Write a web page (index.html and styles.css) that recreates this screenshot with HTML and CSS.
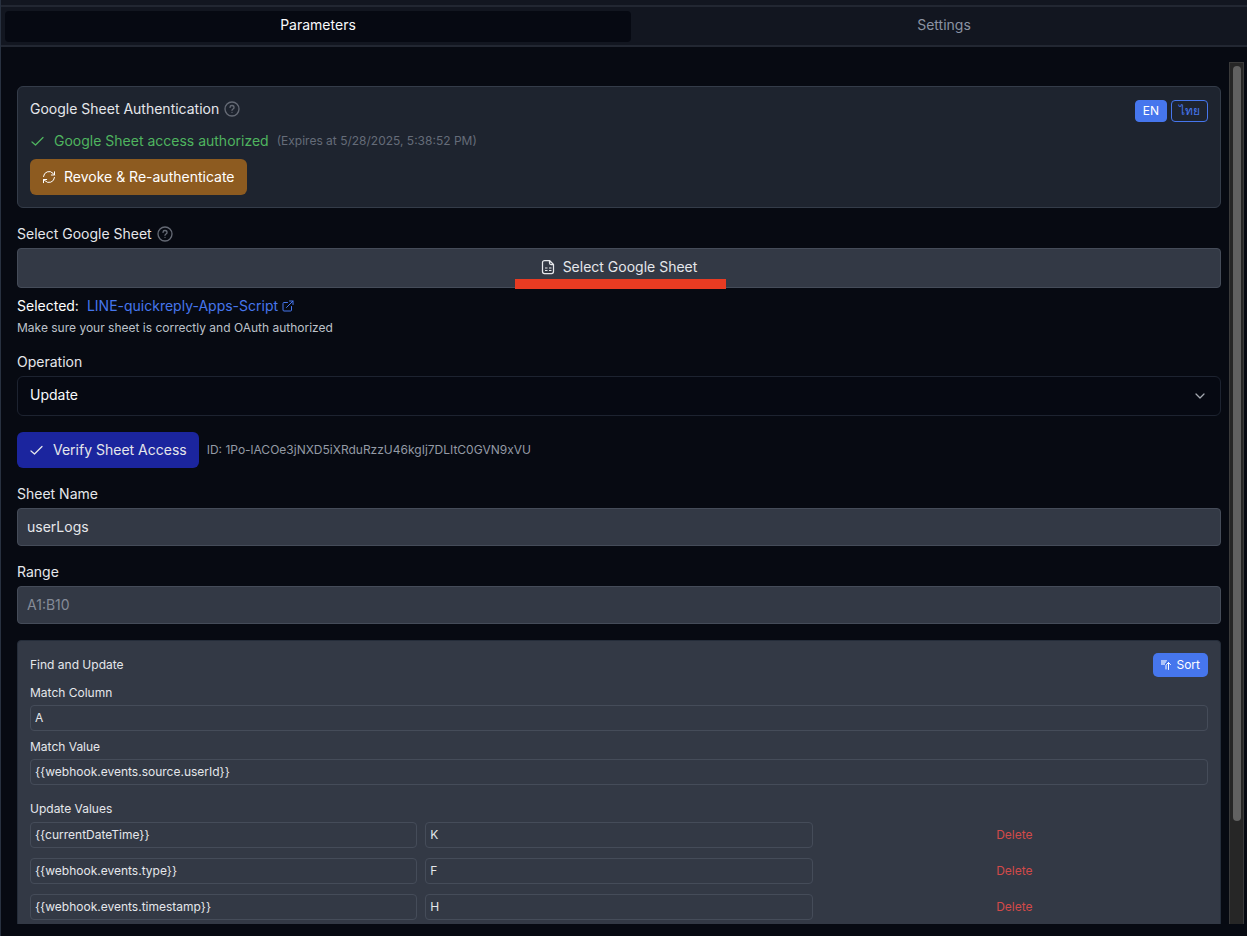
FILE: index.html
```html
<!DOCTYPE html>
<html lang="en">
<head>
<meta charset="utf-8">
<title>Google Sheet Node</title>
<link rel="stylesheet" href="styles.css">
</head>
<body>
<main class="panel">
  <div class="tabs" role="tablist">
    <button class="tab tab-active" type="button" role="tab" aria-selected="true">Parameters</button>
    <button class="tab" type="button" role="tab" aria-selected="false">Settings</button>
  </div>
  <div class="viewport">
    <div class="content">
      <section class="card auth">
        <div class="auth-main">
          <h2 class="title">Google Sheet Authentication
            <svg class="icon-help" viewBox="0 0 24 24"><circle cx="12" cy="12" r="10.5"/><path d="M9 9.500a3 3 0 0 1 6 .5c0 2-3 2-3 4M12 17h.01"/></svg>
          </h2>
          <p class="status">
            <svg class="icon icon-check" viewBox="0 0 14 14"><path d="M2 8 5.500 11 13 3.500"/></svg>
            <span class="status-text">Google Sheet access authorized</span>
            <span class="expires">(Expires at 5/28/2025, 5:38:52 PM)</span>
          </p>
          <button class="btn btn-revoke" type="button">
            <svg class="icon icon-sync" viewBox="0 0 14 14"><path d="M1.500 6.500A5.500 5.500 0 0 1 11 3.300L12.500 5M12.500 1.800V5H9.300M12.500 7.500A5.500 5.500 0 0 1 3 10.700L1.500 9.500M1.500 12.700V9.500h3.200"/></svg>
            Revoke &amp; Re-authenticate
          </button>
        </div>
        <div class="langs">
          <button class="lang lang-active" type="button">EN</button>
          <button class="lang" type="button" lang="th">ไทย</button>
        </div>
      </section>

      <section class="group">
        <h3 class="label">Select Google Sheet
          <svg class="icon-help" viewBox="0 0 24 24"><circle cx="12" cy="12" r="10.5"/><path d="M9 9.500a3 3 0 0 1 6 .5c0 2-3 2-3 4M12 17h.01"/></svg>
        </h3>
        <button class="select-sheet" type="button">
          <span class="select-inner">
            <svg class="icon-sheet" viewBox="0 0 14 16"><path d="M8.500 1.500h-5a2 2 0 0 0-2 2v9a2 2 0 0 0 2 2h7a2 2 0 0 0 2-2v-7zM8.500 1.500V4A1.500 1.500 0 0 0 10 5.500h2.500"/><path class="cells" d="M4 9h2.500M8 9h2.500M4 11.500h2.500M8 11.500h2.500"/></svg>
            Select Google Sheet
            <span class="marker"></span>
          </span>
        </button>
        <p class="selected">Selected:
          <a class="sheet-link" href="#">LINE-quickreply-Apps-Script
            <svg class="icon-link" viewBox="0 0 24 24"><path d="M11 5H4a2 2 0 0 0-2 2v13a2 2 0 0 0 2 2h13a2 2 0 0 0 2-2v-7M9 15 22 2M15 2h7v7"/></svg></a>
        </p>
        <p class="hint">Make sure your sheet is correctly and OAuth authorized</p>
      </section>

      <div class="group">
        <label class="label" for="operation">Operation</label>
        <div class="select-wrap">
          <select class="select" id="operation"><option>Update</option></select>
          <svg class="icon-chevron" viewBox="0 0 10 6"><path d="m1 1 4 4 4-4"/></svg>
        </div>
      </div>

      <div class="verify">
        <button class="btn btn-verify" type="button">
          <svg class="icon icon-check" viewBox="0 0 14 14"><path d="M2 8 5.500 11 13 3.500"/></svg>
          Verify Sheet Access
        </button>
        <span class="sheet-id">ID: 1Po-lACOe3jNXD5iXRduRzzU46kgIj7DLItC0GVN9xVU</span>
      </div>

      <div class="group">
        <label class="label" for="sheet-name">Sheet Name</label>
        <input class="field" id="sheet-name" type="text" value="userLogs">
      </div>
      <div class="group">
        <label class="label" for="range">Range</label>
        <input class="field" id="range" type="text" placeholder="A1:B10">
      </div>

      <section class="card find">
        <header class="find-head">
          <h3 class="small-label">Find and Update</h3>
          <button class="btn-sort" type="button">
            <svg class="icon-sort" viewBox="0 0 10 10"><path class="bars" d="M0 0h6v1.500H5V3H4v2H0z"/><path d="M7.500 9.500V2.500M5.500 4.500l2-2 2 2M5 9V5.500"/></svg>
            Sort
          </button>
        </header>
        <div class="group">
          <label class="small-label" for="match-column">Match Column</label>
          <input class="small-field" id="match-column" type="text" value="A">
        </div>
        <div class="group">
          <label class="small-label" for="match-value">Match Value</label>
          <input class="small-field" id="match-value" type="text" value="{{webhook.events.source.userId}}">
        </div>
        <div class="updates">
          <h4 class="small-label">Update Values</h4>
          <div class="row">
            <input class="small-field" type="text" aria-label="Value 1" value="{{currentDateTime}}">
            <input class="small-field" type="text" aria-label="Column 1" value="K">
            <button class="delete" type="button">Delete</button>
          </div>
          <div class="row">
            <input class="small-field" type="text" aria-label="Value 2" value="{{webhook.events.type}}">
            <input class="small-field" type="text" aria-label="Column 2" value="F">
            <button class="delete" type="button">Delete</button>
          </div>
          <div class="row">
            <input class="small-field" type="text" aria-label="Value 3" value="{{webhook.events.timestamp}}">
            <input class="small-field" type="text" aria-label="Column 3" value="H">
            <button class="delete" type="button">Delete</button>
          </div>
        </div>
      </section>
    </div>
    <div class="scrollbar"><div class="thumb"></div></div>
  </div>
</main>
</body>
</html>
```
FILE: styles.css
```css
* { box-sizing: border-box; margin: 0; }

body {
  background: #070a12;
  color: #e5e7eb;
  font: 400 14px/20px Inter, "Noto Sans", sans-serif;
}

button, input, select { font: inherit; color: inherit; }
button { cursor: pointer; }
h2, h3, h4 { font-size: 14px; font-weight: 400; }

svg {
  fill: none;
  stroke: currentColor;
  stroke-width: 2;
  stroke-linecap: round;
  stroke-linejoin: round;
  flex: none;
}

.panel {
  display: flex;
  flex-direction: column;
  height: 100vh;
  padding-bottom: 12px;
  border-left: 1px solid #283140;
  overflow: hidden;
}

.tabs {
  display: grid;
  grid-template-columns: 1fr 1fr;
  margin: 5px -14px 0 0;
  padding: 4px 4px 3px;
  border-top: 2px solid #222732;
  border-bottom: 2px solid #222732;
  background: #121620;
  box-shadow: 0 -5px #121620;
}
.tab {
  height: 31px;
  padding: 0 12px 3px;
  border: 0;
  border-radius: 4px;
  background: transparent;
  color: #8b93a3;
}
.tab-active { background: #060912; color: #f8fafc; }

.viewport {
  display: flex;
  flex: 1;
  min-height: 0;
  margin-top: 15px;
  padding: 0 3px 0 16px;
  overflow: hidden;
}
.content {
  display: flex;
  flex: 1;
  flex-direction: column;
  gap: 16px;
  min-width: 0;
  padding-top: 24px;
}
.content > * { flex: none; }

.scrollbar {
  width: 15px;
  margin-left: 8px;
  padding: 3px 2px 0 3px;
  border: 1px solid #3a3a3a;
  border-width: 1px 1px 0;
  background: #262626;
}
.thumb { height: 88%; border-radius: 5px; background: #616161; }

.card { padding: 12px; border: 1px solid #343c49; border-radius: 6px; }

.auth { display: flex; justify-content: space-between; background: #1e242f; }
.auth-main { display: flex; flex-direction: column; align-items: flex-start; }
.title, .label { display: flex; align-items: center; gap: 5px; }
.status { display: flex; align-items: center; margin: 12px 0 8px; color: #4fb45f; }
.status-text { margin: 0 8px 0 10px; }
.expires { color: #656c79; font-size: 12px; }

.icon { width: 14px; height: 14px; }
.icon-check { stroke-width: 1.25; }
.icon-sync { stroke-width: 1; }
.icon-help { width: 16px; height: 16px; color: #656a75; }

.btn {
  display: flex;
  align-items: center;
  gap: 8px;
  height: 36px;
  padding: 0 12px;
  border: 0;
  border-radius: 6px;
}
.btn-revoke { background: #8d5b20; color: #fff; }
.btn-verify { gap: 10px; background: #1b259e; }

.langs { display: flex; gap: 4px; margin-top: 1px; }
.lang {
  height: 22px;
  padding: 0 7px;
  border: 1px solid #4676ed;
  border-radius: 4px;
  background: transparent;
  color: #4676ed;
  font-size: 12px;
  line-height: 18px;
}
.lang-active { background: #4676ed; color: #fff; }

.group { display: flex; flex-direction: column; gap: 4px; }
.select-sheet {
  height: 40px;
  border: 1px solid #454c59;
  border-radius: 4px;
  background: #333945;
}
.select-inner { position: relative; display: inline-flex; align-items: center; gap: 8px; }
.icon-sheet { width: 14px; height: 16px; stroke-width: 1.25; }
.cells { stroke-width: 1; stroke-linecap: butt; }
.marker {
  position: absolute;
  right: -29px;
  bottom: -12px;
  left: -26px;
  height: 10px;
  background: #e83b22;
}
.selected { display: flex; gap: 8px; margin-top: 4px; color: #fff; }
.sheet-link { display: flex; align-items: center; gap: 4px; color: #4676ed; text-decoration: none; }
.icon-link { width: 12px; height: 12px; }
.hint { color: #bdc2ca; font-size: 12px; line-height: 16px; }

.select-wrap { position: relative; display: flex; }
.select {
  flex: 1;
  height: 40px;
  padding: 0 12px 2px;
  border: 1px solid #1d2330;
  border-radius: 6px;
  appearance: none;
  background: #060912;
  color: #f8fafc;
}
.icon-chevron {
  position: absolute;
  top: 17px;
  right: 16px;
  width: 10px;
  height: 6px;
  stroke-width: 1.25;
  color: #a4a8b0;
}

.verify { display: flex; align-items: center; gap: 8px; }
.sheet-id { color: #949aa5; font-size: 12px; }

.field {
  width: 100%;
  height: 38px;
  padding: 0 9px 2px;
  border: 1px solid #454c59;
  border-radius: 4px;
  background: #333945;
}
.field::placeholder { color: #858b98; }

.find {
  display: flex;
  flex-direction: column;
  gap: 8px;
  border-color: #252d3a;
  border-radius: 4px;
  background: #333945;
}
.find-head { display: flex; align-items: center; justify-content: space-between; }
.small-label { font-size: 12px; line-height: 16px; }
.small-field {
  width: 100%;
  min-width: 0;
  height: 26px;
  padding: 0 4px 1px;
  border: 1px solid #454c59;
  border-radius: 4px;
  background: transparent;
  font-size: 12px;
}
.btn-sort {
  display: flex;
  align-items: center;
  gap: 5px;
  height: 24px;
  padding: 0 8px;
  border: 0;
  border-radius: 5px;
  background: #4676ed;
  color: #fff;
  font-size: 12px;
}
.icon-sort { width: 10px; height: 10px; stroke-width: 1; }
.bars { fill: #adc4fa; stroke: none; }

.updates { display: flex; flex-direction: column; gap: 10px; margin-top: 8px; }
.updates .small-label { margin-bottom: -5px; }
.row { display: grid; grid-template-columns: 1fr 1fr 1fr; gap: 8px; }
.delete { border: 0; background: transparent; color: #d24a49; font-size: 12px; }
```
